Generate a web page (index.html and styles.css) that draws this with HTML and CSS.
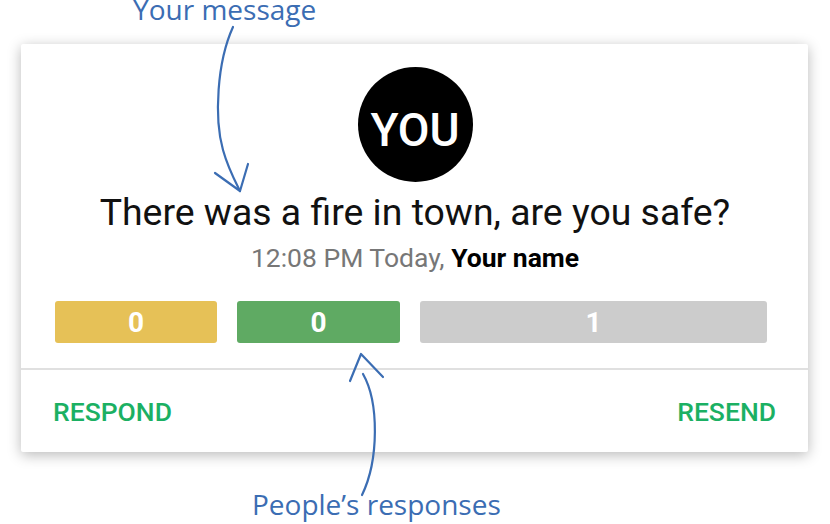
FILE: index.html
```html
<!DOCTYPE html>
<html>
<head>
<meta charset="utf-8">
<link rel="stylesheet" href="styles.css">
</head>
<body>
<div class="stage">
  <div class="label label-top">Your message</div>
  <div class="card">
    <div class="card-body">
      <div class="avatar">YOU</div>
      <div class="headline">There was a fire in town, are you safe?</div>
      <div class="meta">12:08 PM Today, <b>Your name</b></div>
      <div class="bars">
        <div class="bar bar-yellow">0</div>
        <div class="bar bar-green">0</div>
        <div class="bar bar-gray">1</div>
      </div>
    </div>
    <div class="actions">
      <span class="action">RESPOND</span>
      <span class="action">RESEND</span>
    </div>
  </div>
  <div class="label label-bottom">People’s responses</div>
  <svg class="arrows" width="830" height="524" viewBox="0 0 830 524">
    <path d="M233,27 C217,62 214,118 223,150 C228,168 235,181 240,191" />
    <path d="M215,173 L240,191 L248,164" />
    <path d="M363,374 C379,402 379,460 362,495" />
    <path d="M350,381 L361,354 L383,377" />
  </svg>
</div>
</body>
</html>
```

FILE: styles.css
```css
html, body {
  margin: 0;
  padding: 0;
  background: #ffffff;
}

.stage {
  position: relative;
  width: 830px;
  height: 524px;
  overflow: hidden;
}

.label {
  font-family: "Open Sans", sans-serif;
  font-size: 28px;
  color: #3b6db3;
  white-space: nowrap;
}

.label-top {
  height: 44px;
  line-height: 18px;
  padding-left: 133px;
}

.label-bottom {
  margin-top: 33px;
  line-height: 38px;
  padding-left: 252px;
}

.card {
  margin-left: 21px;
  width: 787px;
  height: 408px;
  background: #ffffff;
  border-radius: 2px;
  box-shadow: 0 3px 14px rgba(0, 0, 0, 0.28);
  display: flex;
  flex-direction: column;
  font-family: Roboto, "Liberation Sans", sans-serif;
}

.card-body {
  padding: 23px 41px 0 34px;
  display: flex;
  flex-direction: column;
  align-items: center;
  border-bottom: 2px solid #e0e0e0;
  height: 326px;
  box-sizing: border-box;
}

.avatar {
  width: 115px;
  height: 115px;
  box-sizing: border-box;
  padding-top: 10px;
  border-radius: 50%;
  background: #000000;
  color: #ffffff;
  font-size: 46px;
  font-weight: 500;
  display: flex;
  align-items: center;
  justify-content: center;
  margin-left: 8px;
}

.headline {
  margin-top: 8px;
  font-size: 37.4px;
  line-height: 44px;
  color: #111111;
  white-space: nowrap;
  margin-left: 8px;
}

.meta {
  margin-top: 10px;
  font-size: 26.5px;
  line-height: 28px;
  color: #777777;
  margin-left: 8px;
  white-space: nowrap;
}

.meta b {
  color: #000000;
  font-weight: 700;
}

.bars {
  margin-top: 29px;
  align-self: stretch;
  display: flex;
  gap: 20px;
}

.bar {
  height: 42px;
  border-radius: 3px;
  color: #ffffff;
  font-weight: 700;
  font-size: 28px;
  display: flex;
  align-items: center;
  justify-content: center;
}

.bar-yellow { width: 162px; background: #e6c157; }
.bar-green { width: 163px; background: #5faa63; }
.bar-gray { width: 347px; background: #cccccc; }

.actions {
  flex: 1;
  display: flex;
  justify-content: space-between;
  align-items: center;
  padding: 0 32px;
}

.action {
  font-size: 26.5px;
  font-weight: 500;
  color: #1bb063;
}

.arrows {
  position: absolute;
  left: 0;
  top: 0;
  pointer-events: none;
  fill: none;
  stroke: #3b6db3;
  stroke-width: 2.2;
  stroke-linecap: round;
  stroke-linejoin: round;
}
```
